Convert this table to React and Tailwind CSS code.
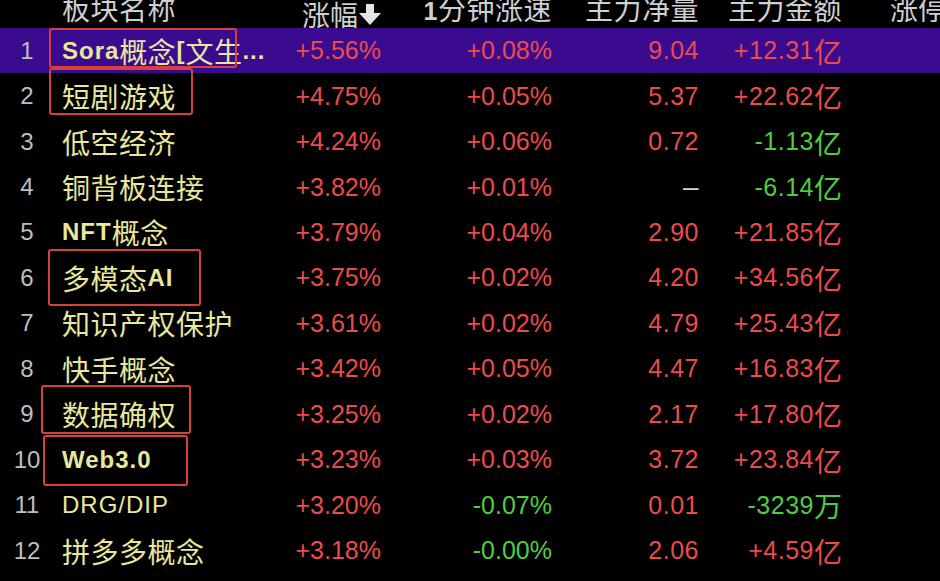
const rows = [
  { n: 1, name: "Sora概念[文生", more: true, chg: "+5.56%", spd: "+0.08%", net: "9.04", amt: "+12.31", unit: "亿" },
  { n: 2, name: "短剧游戏", chg: "+4.75%", spd: "+0.05%", net: "5.37", amt: "+22.62", unit: "亿" },
  { n: 3, name: "低空经济", chg: "+4.24%", spd: "+0.06%", net: "0.72", amt: "-1.13", unit: "亿" },
  { n: 4, name: "铜背板连接", chg: "+3.82%", spd: "+0.01%", net: "–", amt: "-6.14", unit: "亿" },
  { n: 5, name: "NFT概念", chg: "+3.79%", spd: "+0.04%", net: "2.90", amt: "+21.85", unit: "亿" },
  { n: 6, name: "多模态AI", chg: "+3.75%", spd: "+0.02%", net: "4.20", amt: "+34.56", unit: "亿" },
  { n: 7, name: "知识产权保护", chg: "+3.61%", spd: "+0.02%", net: "4.79", amt: "+25.43", unit: "亿" },
  { n: 8, name: "快手概念", chg: "+3.42%", spd: "+0.05%", net: "4.47", amt: "+16.83", unit: "亿" },
  { n: 9, name: "数据确权", chg: "+3.25%", spd: "+0.02%", net: "2.17", amt: "+17.80", unit: "亿" },
  { n: 10, name: "Web3.0", chg: "+3.23%", spd: "+0.03%", net: "3.72", amt: "+23.84", unit: "亿" },
  { n: 11, name: "DRG/DIP", thin: true, chg: "+3.20%", spd: "-0.07%", net: "0.01", amt: "-3239", unit: "万" },
  { n: 12, name: "拼多多概念", chg: "+3.18%", spd: "-0.00%", net: "2.06", amt: "+4.59", unit: "亿" },
];

// red outlines drawn over the list
const boxes = [
  "left-[49px] top-[28px] w-[188px] h-[40px]",
  "left-[49px] top-[68px] w-[144px] h-[47px]",
  "left-[48px] top-[249px] w-[153px] h-[57px]",
  "left-[41px] top-[385px] w-[150px] h-[49px]",
  "left-[43px] top-[435px] w-[145px] h-[51px]",
];

const cjk = "font-['Noto_Sans_CJK_SC',sans-serif]";
const latin = "font-['Liberation_Sans','Noto_Sans_CJK_SC',sans-serif]";

const tone = (v) => (v.startsWith("-") ? "text-[#4fcc3f]" : /\d/.test(v) ? "text-[#ec4b4b]" : "text-[#d4d4d4]");

function Name({ text, thin }) {
  const parts = text.split(/([\x00-\x7f]+)/).filter(Boolean);
  return parts.map((p, i) =>
    /^[\x00-\x7f]+$/.test(p) ? (
      <span key={i} className={`${latin} text-[24px] tracking-[1px] ${thin ? "" : "font-bold"}`}>{p}</span>
    ) : (
      <span key={i} className={`${cjk} text-[28px] tracking-[0.5px]`}>{p}</span>
    )
  );
}

function Arrow() {
  return (
    <svg width="22" height="22" viewBox="0 0 22 22" className="ml-[1px] mb-[2px]">
      <rect x="7" y="0" width="8" height="10" fill="#e4e4e4" />
      <polygon points="0,9 22,9 11,21" fill="#e4e4e4" />
    </svg>
  );
}

export default function App() {
  return (
    <div className="relative w-[940px] h-[581px] bg-black overflow-hidden select-none">
      <div className="flex h-[28px] overflow-hidden text-[#cfcfcf]">
        <div className="w-[54px] shrink-0" />
        <div className={`w-[236px] shrink-0 pl-[8px] ${cjk} text-[28px] tracking-[0.5px] leading-[28px] -mt-[6px]`}>板块名称</div>
        <div className={`w-[91px] shrink-0 flex justify-end items-end ${cjk} text-[28px] leading-[28px] -mt-[6px]`}>
          涨幅<Arrow />
        </div>
        <div className={`w-[171px] shrink-0 text-right ${cjk} text-[28px] tracking-[0.5px] leading-[28px] -mt-[6px]`}>
          <span className={`${latin} font-bold text-[25px]`}>1</span>分钟涨速
        </div>
        <div className={`w-[147px] shrink-0 text-right ${cjk} text-[28px] tracking-[0.5px] leading-[28px] -mt-[6px]`}>主力净量</div>
        <div className={`w-[143px] shrink-0 text-right ${cjk} text-[28px] tracking-[0.5px] leading-[28px] -mt-[6px]`}>主力金额</div>
        <div className={`pl-[48px] whitespace-nowrap ${cjk} text-[28px] leading-[28px] -mt-[6px]`}>涨停家数</div>
      </div>

      {rows.map((r) => (
        <div key={r.n} className={`flex items-center h-[45.45px] ${r.n === 1 ? "bg-[#3a0b8e]" : ""}`}>
          <div className={`w-[54px] shrink-0 text-center ${latin} text-[24px] leading-none text-[#bebebe]`}>{r.n}</div>
          <div className="w-[236px] shrink-0 pl-[8px] leading-none text-[#e8e79c] whitespace-nowrap flex items-center">
            <Name text={r.name} thin={r.thin} />
            {r.more && <span className={`${latin} text-[24px] font-bold tracking-[1px]`}>...</span>}
          </div>
          <div className={`w-[91px] shrink-0 text-right ${latin} text-[25px] leading-none ${tone(r.chg)}`}>{r.chg}</div>
          <div className={`w-[171px] shrink-0 text-right ${latin} text-[25px] leading-none ${tone(r.spd)}`}>{r.spd}</div>
          <div className={`w-[147px] shrink-0 text-right ${latin} text-[25px] tracking-[0.5px] leading-none ${r.net === "–" ? "text-[#d4d4d4] text-[28px]" : tone(r.net)}`}>{r.net}</div>
          <div className={`w-[143px] shrink-0 flex justify-end items-center leading-none ${tone(r.amt)}`}>
            <span className={`${latin} text-[25px] tracking-[0.5px]`}>{r.amt}</span>
            <span className={`${cjk} text-[28px]`}>{r.unit}</span>
          </div>
        </div>
      ))}

      {boxes.map((b, i) => (
        <div key={i} className={`absolute ${b} border-2 border-[#d8403c] rounded-[3px] pointer-events-none`} />
      ))}
    </div>
  );
}
